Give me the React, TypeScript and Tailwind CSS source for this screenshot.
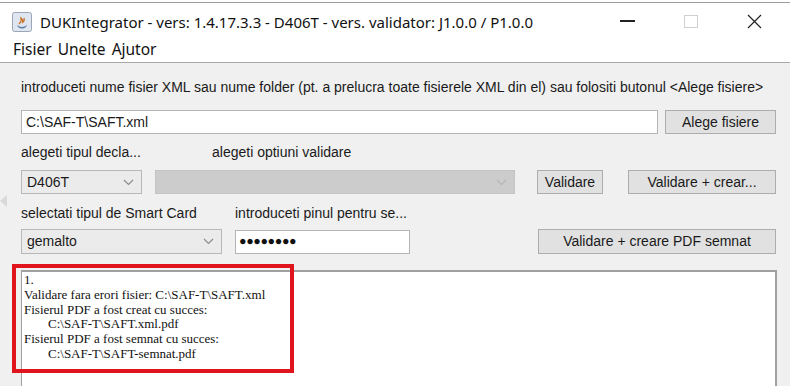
import React from 'react';

const Chevron = ({ color = '#8a8a8a' }: { color?: string }) => (
  <svg width="11" height="7" viewBox="0 0 11 7" fill="none">
    <path d="M1 1 L5.5 5.5 L10 1" stroke={color} strokeWidth="1.1" />
  </svg>
);

const JavaIcon = () => (
  <svg width="20" height="20" viewBox="0 0 20 20">
    <rect x="0.5" y="0.5" width="19" height="19" rx="2" fill="#dfe6ef" stroke="#9aa6b5" />
    <path d="M5 13 Q10 17 15 13 L14 15 Q10 18 6 15 Z" fill="#5d7fa8" />
    <path d="M7 12 Q10 9 9 6 Q12 8 10 11 Q13 9 12 6" stroke="#c9772f" strokeWidth="1.3" fill="none" />
  </svg>
);

const Button = ({ children, className = '' }: { children: React.ReactNode; className?: string }) => (
  <div
    className={`flex items-center justify-center h-[24px] border border-[#adadad] bg-[#e1e1e1] text-[14px] text-[#1a1a1a] ${className}`}
  >
    {children}
  </div>
);

const Combo = ({ value, className = '', disabled = false }: { value?: string; className?: string; disabled?: boolean }) => (
  <div
    className={`flex items-center justify-between h-[24px] pl-[5px] pr-[7px] border ${
      disabled ? 'border-[#c4c4c4] bg-[#cccccc]' : 'border-[#b8b8b8] bg-[#ebebeb]'
    } text-[14px] text-[#1a1a1a] ${className}`}
  >
    <span>{value}</span>
    <Chevron color={disabled ? '#b5b5b5' : '#8a8a8a'} />
  </div>
);

export default function App() {
  const ui = { fontFamily: '"Noto Sans", "Open Sans", sans-serif' };
  const tahoma = { fontFamily: '"Liberation Sans", Arial, sans-serif' };
  const serif = { fontFamily: '"Liberation Serif", "Times New Roman", serif' };

  return (
    <div className="w-[800px] h-[386px] bg-white overflow-hidden relative">
      <div className="w-[790px] h-full pt-[2px] flex flex-col">
        <div className="border-t border-[#9c9c9c] h-[35px] flex items-center bg-white" style={ui}>
          <div className="ml-[12px] mt-[3px]">
            <JavaIcon />
          </div>
          <div className="ml-[8px] mt-[4px] text-[15px] text-[#111]">
            DUKIntegrator - vers: 1.4.17.3.3 - D406T - vers. validator: J1.0.0 / P1.0.0
          </div>
          <div className="flex-1" />
          <div className="w-[15px] h-[1.5px] bg-[#222] mr-[49px] mt-[2px]" />
          <div className="w-[14px] h-[13px] border border-[#cfcfcf] mr-[49px] mt-[2px]" />
          <svg width="15" height="15" viewBox="0 0 15 15" className="mr-[28px] mt-[2px]">
            <path d="M1 1 L14 14 M14 1 L1 14" stroke="#222" strokeWidth="1.2" />
          </svg>
        </div>
        <div className="h-[25px] flex items-center pl-[13px] gap-[6px] text-[15.5px] text-[#111] bg-white" style={ui}>
          <span>Fisier</span>
          <span>Unelte</span>
          <span>Ajutor</span>
        </div>
        <div className="border-t border-[#a8a8a8] flex-1 bg-[#f0f0f0] flex flex-col pl-[21px] pr-[13px]" style={tahoma}>
          <div className="h-[47px] flex items-center text-[14px] text-[#1a1a1a] pt-[2px] whitespace-nowrap">
            introduceti nume fisier XML sau nume folder (pt. a prelucra toate fisierele XML din el) sau folositi butonul &lt;Alege fisiere&gt;
          </div>
          <div className="flex items-center h-[24px]">
            <div className="w-[637px] h-[24px] bg-white border border-[#b4b4b4] flex items-center pl-[4px] text-[14px] text-[#1a1a1a]">
              C:\SAF-T\SAFT.xml
            </div>
            <Button className="ml-[7px] w-[111px]">Alege fisiere</Button>
          </div>
          <div className="h-[36px] flex items-center text-[14px] text-[#1a1a1a]">
            <span className="w-[191px]">alegeti tipul decla...</span>
            <span>alegeti optiuni validare</span>
          </div>
          <div className="flex items-center h-[24px]">
            <Combo value="D406T" className="w-[121px]" />
            <Combo className="ml-[13px] w-[360px]" disabled />
            <Button className="ml-[22px] w-[66px]">Validare</Button>
            <Button className="ml-[25px] w-[148px]">Validare + crear...</Button>
          </div>
          <div className="h-[35px] flex items-center text-[14px] text-[#1a1a1a] pt-[4px]">
            <span className="w-[214px]">selectati tipul de Smart Card</span>
            <span>introduceti pinul pentru se...</span>
          </div>
          <div className="flex items-center h-[25px]">
            <Combo value="gemalto" className="w-[201px] h-[25px]" />
            <div className="ml-[13px] w-[175px] h-[24px] bg-white border border-[#b4b4b4] flex items-center pl-[3px] text-[12.5px] tracking-[-0.4px] text-[#111]">
              ●●●●●●●●
            </div>
            <Button className="ml-[128px] w-[238px] h-[25px]">Validare + creare PDF semnat</Button>
          </div>
          <div className="mt-[16px] flex-1 w-[756px] bg-white border-t-2 border-r-2 border-l border-[#a0a0a0] pt-[1px] pl-[2px]">
            <div className="text-[13px] leading-[14.8px] text-[#111]" style={serif}>
              <div>1.</div>
              <div>Validare fara erori fisier: C:\SAF-T\SAFT.xml</div>
              <div>Fisierul PDF a fost creat cu succes:</div>
              <div className="pl-[24px]">C:\SAF-T\SAFT.xml.pdf</div>
              <div>Fisierul PDF a fost semnat cu succes:</div>
              <div className="pl-[24px]">C:\SAF-T\SAFT-semnat.pdf</div>
            </div>
          </div>
        </div>
      </div>
      <svg width="8" height="12" viewBox="0 0 8 12" className="absolute left-0 top-[195px]">
        <path d="M7 0 L0 6 L7 12 Z" fill="#d9d9d9" />
      </svg>
      <div className="absolute left-[12px] top-[264px] w-[282px] h-[109px] border-[4px] border-[#e0141c]" />
    </div>
  );
}
